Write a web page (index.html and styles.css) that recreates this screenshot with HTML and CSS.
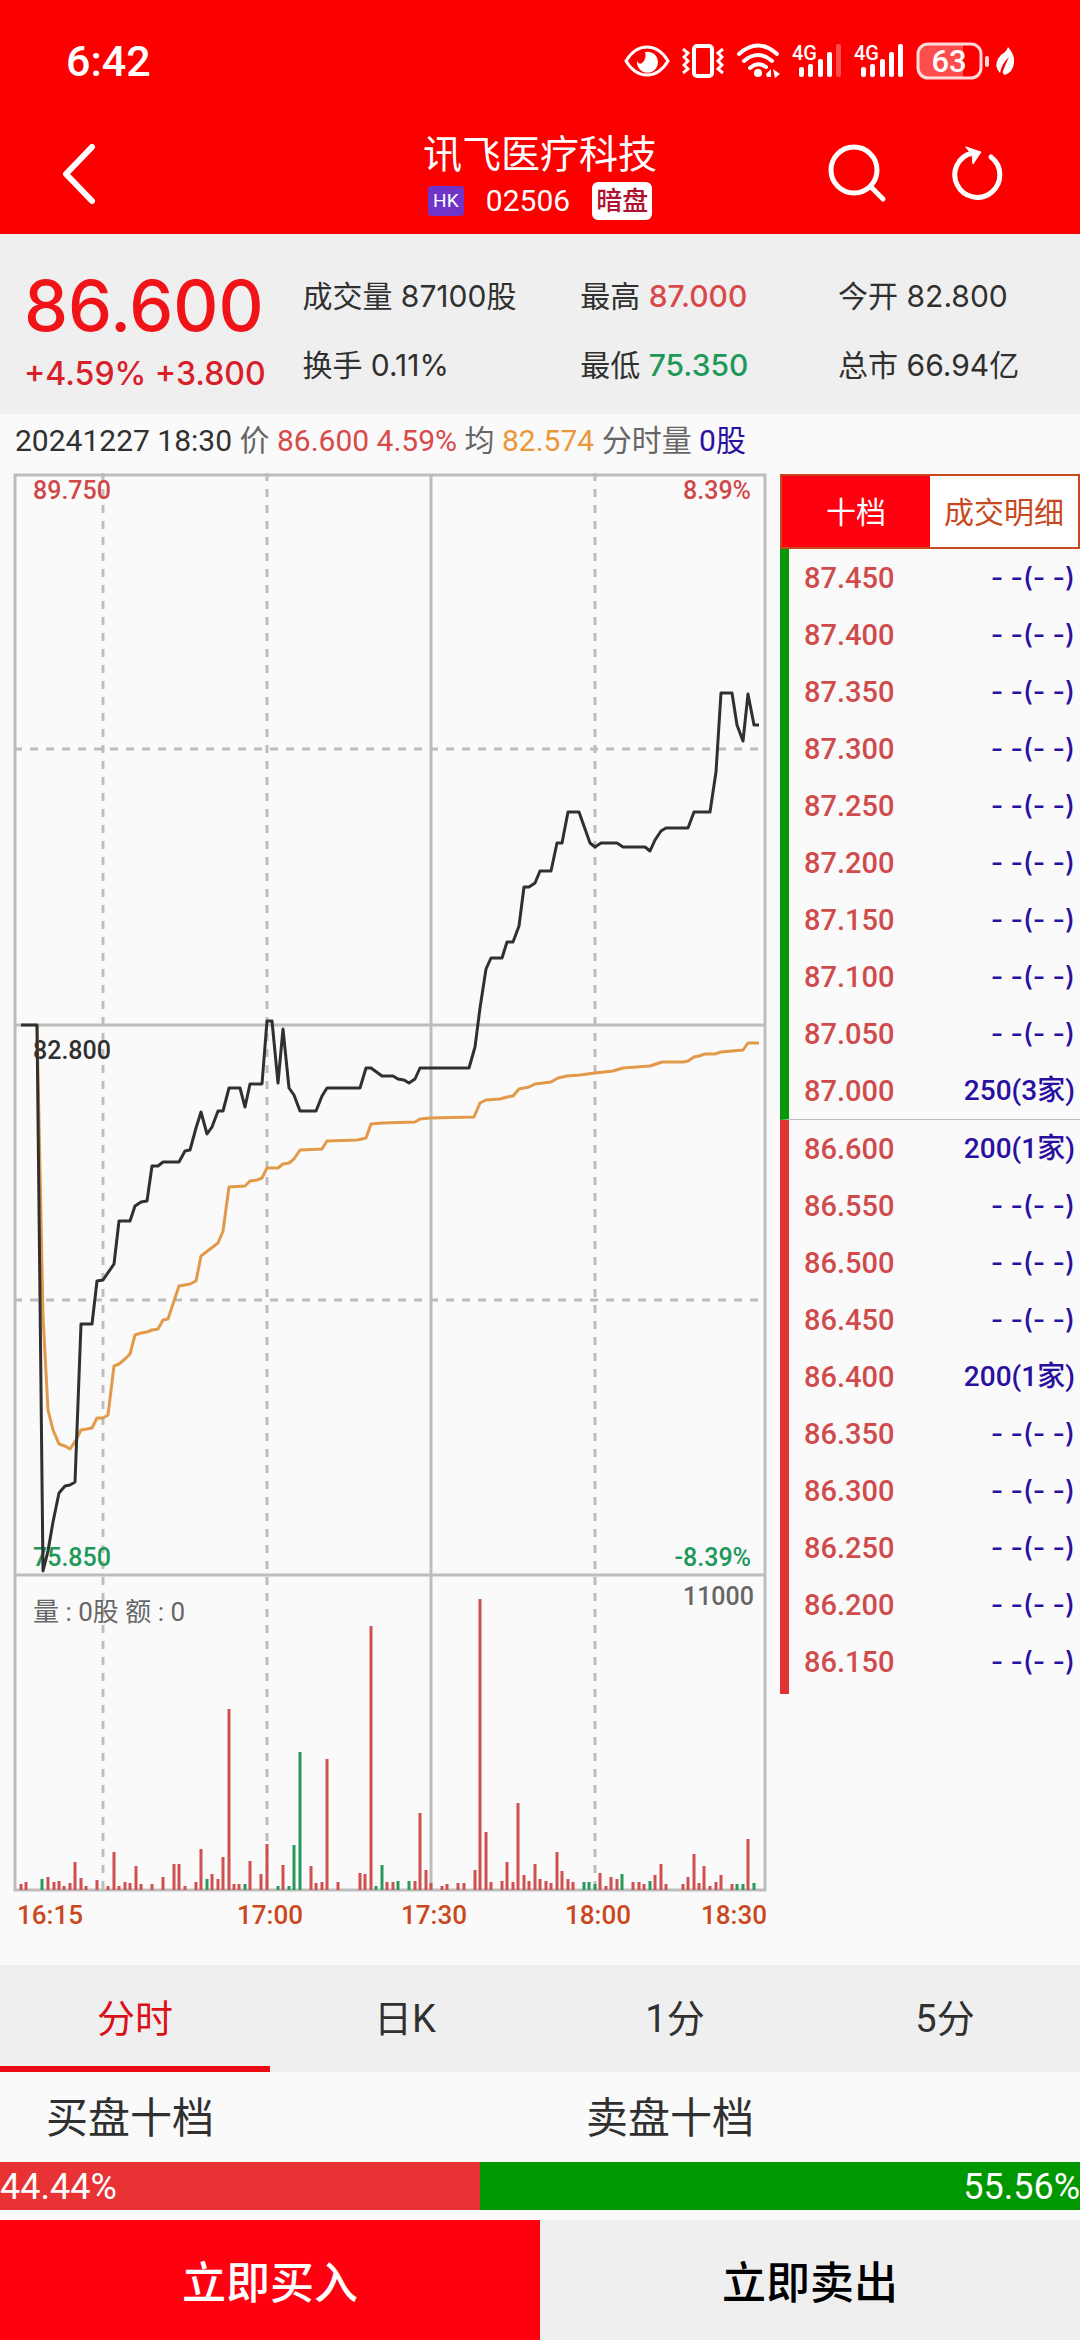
FILE: index.html
```html
<!DOCTYPE html>
<html lang="zh-CN">
<head>
  <meta charset="UTF-8">
  <meta name="viewport" content="width=device-width, initial-scale=1.0">
  <title>讯飞医疗科技 02506</title>
  <link rel="stylesheet" href="styles.css">
</head>
<body>
  <header class="top">
    <div class="status">
      <span class="clock">6:42</span>
      <div class="status-icons">
        <svg width="46" height="32" viewBox="0 0 46 32" fill="none" stroke="#fff" stroke-width="3">
          <path d="M2 16C8 6 15 2 23 2S38 6 44 16C38 26 31 30 23 30S8 26 2 16Z"/>
          <path d="M21 7A10.500 10.500 0 1 1 13 16Q15 20 18 18Q23 14 21 7Z" fill="#fff" stroke="none"/>
        </svg>
        <svg width="42" height="36" viewBox="0 0 42 36" fill="none" stroke="#fff" stroke-width="3">
          <rect x="12" y="3" width="18" height="30" rx="3" stroke-width="4"/>
          <path d="M1 6l5 4-4 4 4 4-4 4 4 4-5 4M41 6l-5 4 4 4-4 4 4 4-4 4 5 4"/>
        </svg>
        <svg width="44" height="36" viewBox="0 0 44 36" fill="none" stroke="#fff" stroke-width="4" stroke-linecap="round">
          <path d="M3 11Q22 -6 41 11M8 18Q22 6 36 18M14 25Q22 18 30 24"/>
          <circle cx="22" cy="30" r="4" fill="#fff" stroke="none"/>
          <path d="M30 31l5-5v8h-4zM37 26l7 5-5 4z" fill="#fff" stroke="none"/>
        </svg>
        <svg width="50" height="40" viewBox="0 -2 50 40" fill="#fff">
          <text class="net" x="0" y="17">4G</text>
          <rect x="7" y="24" width="5" height="10" rx="2"/>
          <rect x="16" y="21" width="5" height="13" rx="2"/>
          <rect x="26" y="16" width="5" height="18" rx="2"/>
          <rect x="35" y="9" width="5" height="25" rx="2"/>
          <rect x="44" y="1" width="5" height="33" rx="2" opacity=".3"/>
        </svg>
        <svg width="50" height="40" viewBox="0 -2 50 40" fill="#fff">
          <text class="net" x="0" y="17">4G</text>
          <rect x="7" y="24" width="5" height="10" rx="2"/>
          <rect x="16" y="21" width="5" height="13" rx="2"/>
          <rect x="26" y="16" width="5" height="18" rx="2"/>
          <rect x="35" y="9" width="5" height="25" rx="2"/>
          <rect x="44" y="1" width="5" height="33" rx="2"/>
        </svg>
        <svg width="98" height="38" viewBox="0 0 98 38" fill="#fff">
          <path d="M12 3H47V35H12Q3 35 3 26V12Q3 3 12 3Z" opacity=".3"/>
          <rect x="2" y="2" width="63" height="34" rx="10" fill="none" stroke="#fff" stroke-width="3" opacity=".85"/>
          <text class="battery" x="33" y="30" text-anchor="middle">63</text>
          <rect x="69" y="14" width="4" height="11" rx="2" opacity=".85"/>
          <path d="M92 5Q99 13 98 21Q97 30 89 33Q86 32 87 29Q90 21 93 15Q86 21 84 31Q78 25 82 17Q85 12 89 10Q91 8 92 5Z"/>
        </svg>
      </div>
    </div>
    <div class="nav">
      <button class="icon-btn back" type="button" aria-label="返回">
        <svg width="36" height="60" viewBox="0 0 36 60" fill="none" stroke="#fff" stroke-width="6" stroke-linecap="round" stroke-linejoin="round">
          <path d="M32 3L6 30L32 57"/>
        </svg>
      </button>
      <div class="stock">
        <h1>讯飞医疗科技</h1>
        <div class="stock-code">
          <span class="market">HK</span>
          <span>02506</span>
          <span class="grey-market">暗盘</span>
        </div>
      </div>
      <div class="actions">
        <button class="icon-btn" type="button" aria-label="搜索">
          <svg width="60" height="60" viewBox="0 0 60 60" fill="none" stroke="#fff" stroke-width="5" stroke-linecap="round">
            <circle cx="27" cy="26" r="23"/>
            <path d="M44 43L56 55"/>
          </svg>
        </button>
        <button class="icon-btn" type="button" aria-label="刷新">
          <svg width="60" height="60" viewBox="0 0 60 60" fill="none" stroke="#fff" stroke-width="5" stroke-linecap="round">
            <path d="M44 13A22.500 22.500 0 1 1 25 9"/>
            <path d="M19 3L34 8L26 20L25 11Z" fill="#fff" stroke-width="1"/>
          </svg>
        </button>
      </div>
    </div>
  </header>

  <section class="summary">
    <div class="last">
      <strong>86.600</strong>
      <span>+4.59% +3.800</span>
    </div>
    <ul class="figures">
      <li>成交量 87100股</li>
      <li>最高 <b class="up">87.000</b></li>
      <li>今开 82.800</li>
      <li>换手 0.11%</li>
      <li>最低 <b class="down">75.350</b></li>
      <li>总市 66.94亿</li>
    </ul>
  </section>

  <p class="tick">20241227 18:30 <i>价</i> <span class="up">86.600 4.59%</span> <i>均</i> <span class="avg">82.574</span> <i>分时量</i> <span class="vol">0股</span></p>

  <main class="board">
    <svg class="chart" viewBox="0 466 780 1499">
      <!-- grid -->
      <g class="grid">
        <path d="M15 475H765V1890H15ZM15 1025H765M15 1575H765M431 475V1890"/>
        <path stroke-dasharray="8 8" d="M103 473V1890M267 473V1890M595 473V1890M14 749H765M14 1300H765"/>
      </g>

      <!-- scale labels -->
      <g class="scale">
        <text class="s-up" x="33" y="499">89.750</text>
        <text class="s-up" x="751" y="499" text-anchor="end">8.39%</text>
        <text class="s-flat" x="33" y="1059">82.800</text>
        <text class="s-down" x="33" y="1566">75.850</text>
        <text class="s-down" x="751" y="1566" text-anchor="end">-8.39%</text>
        <text class="s-muted s-volume" x="33" y="1621">量 : 0股 额 : 0</text>
        <text class="s-muted" x="754" y="1605" text-anchor="end">11000</text>
      </g>
      <g class="times">
        <text x="17" y="1924">16:15</text>
        <text x="270" y="1924" text-anchor="middle">17:00</text>
        <text x="434" y="1924" text-anchor="middle">17:30</text>
        <text x="598" y="1924" text-anchor="middle">18:00</text>
        <text x="767" y="1924" text-anchor="end">18:30</text>
      </g>

      <!-- volume, one bar a minute -->
      <path class="bars bars-up" d="M21 1890V1884M26 1890V1882M48 1890V1877M54 1890V1882M59 1890V1881M64 1890V1886M70 1890V1883M75 1890V1862M81 1890V1878M86 1890V1886M97 1890V1880M108 1890V1886M114 1890V1852M119 1890V1886M125 1890V1882M130 1890V1883M136 1890V1866M141 1890V1884M152 1890V1884M163 1890V1877M174 1890V1864M179 1890V1864M185 1890V1886M196 1890V1882M201 1890V1849M212 1890V1874M218 1890V1879M223 1890V1857M229 1890V1709M234 1890V1884M239 1890V1884M250 1890V1861M261 1890V1874M267 1890V1844M283 1890V1865M311 1890V1866M316 1890V1883M322 1890V1882M327 1890V1759M338 1890V1882M360 1890V1873M365 1890V1874M371 1890V1626M387 1890V1882M393 1890V1882
        M415 1890V1881M420 1890V1813M426 1890V1870M431 1890V1883M442 1890V1886M447 1890V1884M458 1890V1883M464 1890V1883M475 1890V1870M480 1890V1599M486 1890V1832M491 1890V1882M502 1890V1881M507 1890V1862M513 1890V1882M518 1890V1803M524 1890V1875M529 1890V1881M535 1890V1864M540 1890V1879M546 1890V1881M551 1890V1883M557 1890V1852M562 1890V1871M568 1890V1879M573 1890V1882M600 1890V1873M606 1890V1886M611 1890V1877M617 1890V1879M633 1890V1882M639 1890V1882M644 1890V1884M655 1890V1875M661 1890V1864M666 1890V1884M683 1890V1884M688 1890V1877M694 1890V1854M699 1890V1883M704 1890V1866M710 1890V1886M716 1890V1882M721 1890V1875M732 1890V1884M748 1890V1839"/>
      <path class="bars bars-down" d="M42 1890V1879M207 1890V1879M245 1890V1884M278 1890V1886M289 1890V1886M294 1890V1845M300 1890V1752M376 1890V1886M382 1890V1865M398 1890V1881M409 1890V1881M584 1890V1882M589 1890V1882M595 1890V1884M622 1890V1874M650 1890V1881M737 1890V1884M743 1890V1884M754 1890V1883"/>

      <!-- average and price -->
      <polyline class="line line-avg" points="37,1025 43,1316 48,1410 53,1430 59,1444 65,1446 70,1449 76,1440 81,1430 87,1429 92,1428 97,1418 103,1418 108,1415 114,1366 119,1364 125,1359 130,1354 135,1335 141,1333 147,1332 152,1330 158,1329 163,1320 168,1319 174,1301 179,1286 190,1284 196,1281 201,1256 218,1243 223,1231 229,1187 245,1186 250,1181 257,1180 262,1178 267,1168 278,1168 283,1164 289,1163 294,1159 300,1150 322,1149 327,1141 357,1140 366,1138 371,1124 382,1123 415,1122 420,1119 430,1118 474,1117 480,1103 486,1100 500,1099 507,1097 513,1096 519,1089 529,1087 535,1084 551,1082 558,1078 567,1076 580,1075 595,1073 613,1071 623,1068 650,1066 662,1062 683,1062 688,1061 694,1057 699,1056 705,1054 715,1054 721,1052 743,1050 748,1043 759,1043"/>
      <polyline class="line line-price" points="21,1025 37,1025 43,1571 48,1551 53,1522 59,1493 65,1486 70,1485 75,1482 81,1324 92,1324 97,1281 103,1280 114,1264 119,1221 130,1221 135,1206 141,1202 147,1201 152,1166 158,1166 163,1162 179,1162 185,1151 190,1150 196,1128 201,1112 207,1134 212,1127 218,1111 223,1111 229,1088 240,1088 245,1107 250,1084 262,1084 267,1021 272,1021 278,1083 283,1029 289,1088 294,1095 300,1111 316,1111 322,1096 327,1088 360,1088 366,1068 371,1068 382,1076 393,1076 398,1079 404,1080 409,1083 415,1079 420,1068 469,1068 475,1047 480,1008 486,969 491,958 502,958 507,942 513,942 519,926 524,887 529,887 535,883 540,871 551,871 557,843 562,843 568,812 579,812 590,843 595,847 601,843 617,843 623,847 645,847 650,851 655,840 661,831 666,828 688,828 694,812 710,812 716,772 721,693 732,693 737,725 743,741 748,694 754,725 759,725"/>
    </svg>

    <aside class="depth">
      <div class="depth-tabs">
        <button class="active" type="button">十档</button>
        <button type="button">成交明细</button>
      </div>
      <div class="asks">
        <table>
          <tr><td>87.450</td><td class="none">- -(- -)</td></tr>
          <tr><td>87.400</td><td class="none">- -(- -)</td></tr>
          <tr><td>87.350</td><td class="none">- -(- -)</td></tr>
          <tr><td>87.300</td><td class="none">- -(- -)</td></tr>
          <tr><td>87.250</td><td class="none">- -(- -)</td></tr>
          <tr><td>87.200</td><td class="none">- -(- -)</td></tr>
          <tr><td>87.150</td><td class="none">- -(- -)</td></tr>
          <tr><td>87.100</td><td class="none">- -(- -)</td></tr>
          <tr><td>87.050</td><td class="none">- -(- -)</td></tr>
          <tr><td>87.000</td><td>250(3家)</td></tr>
        </table>
      </div>
      <div class="bids">
        <table>
          <tr><td>86.600</td><td>200(1家)</td></tr>
          <tr><td>86.550</td><td class="none">- -(- -)</td></tr>
          <tr><td>86.500</td><td class="none">- -(- -)</td></tr>
          <tr><td>86.450</td><td class="none">- -(- -)</td></tr>
          <tr><td>86.400</td><td>200(1家)</td></tr>
          <tr><td>86.350</td><td class="none">- -(- -)</td></tr>
          <tr><td>86.300</td><td class="none">- -(- -)</td></tr>
          <tr><td>86.250</td><td class="none">- -(- -)</td></tr>
          <tr><td>86.200</td><td class="none">- -(- -)</td></tr>
          <tr><td>86.150</td><td class="none">- -(- -)</td></tr>
        </table>
      </div>
    </aside>
  </main>

  <nav class="periods">
    <button class="active" type="button">分时</button>
    <button type="button">日K</button>
    <button type="button">1分</button>
    <button type="button">5分</button>
  </nav>

  <section class="ratio">
    <div class="ratio-titles">
      <h2>买盘十档</h2>
      <h2>卖盘十档</h2>
    </div>
    <div class="ratio-bar">
      <span class="buy-part" style="width: 44.44%">44.44%</span>
      <span class="sell-part">55.56%</span>
    </div>
  </section>

  <footer class="trade">
    <button class="buy" type="button">立即买入</button>
    <button class="sell" type="button">立即卖出</button>
  </footer>
</body>
</html>
```
FILE: styles.css
```css
* {
  box-sizing: border-box;
}

body {
  margin: 0;
  min-height: 100vh;
  background: #fafafa;
  color: #303030;
  font-family: Roboto, "Noto Sans CJK SC", sans-serif;
  font-size: 30px;
}

h1,
h2,
p,
ul {
  margin: 0;
  padding: 0;
  font-weight: 400;
}

button {
  border: none;
  padding: 0;
  background: none;
  color: inherit;
  font: inherit;
  cursor: pointer;
}

svg {
  display: block;
}

/* header */
.top {
  background: #fc0000;
  color: #fff;
}

.status {
  display: flex;
  align-items: center;
  justify-content: space-between;
  height: 122px;
  padding: 0 66px;
}

.clock {
  font-size: 43px;
  font-weight: 500;
}

.status-icons {
  display: flex;
  align-items: center;
  gap: 12px;
}

.net {
  font-size: 20px;
  font-weight: 500;
}

.battery {
  font-size: 31px;
  font-weight: 500;
}

.nav {
  display: grid;
  grid-template-columns: 1fr auto 1fr;
  align-items: center;
  height: 112px;
  padding: 0 73px 8px 60px;
}

.icon-btn {
  display: flex;
  justify-self: start;
}

.stock {
  text-align: center;
  padding-left: 13px;
}

.stock h1 {
  font-size: 39px;
  line-height: 54px;
}

.stock-code {
  display: flex;
  align-items: center;
  justify-content: center;
  gap: 22px;
  line-height: 38px;
}

.market {
  width: 36px;
  border-radius: 4px;
  background: #7035c8;
  font-size: 19px;
  line-height: 30px;
}

.grey-market {
  padding: 0 4px;
  border-radius: 6px;
  background: #fff;
  color: #b01030;
  font-size: 26px;
  font-weight: 500;
}

.actions {
  display: flex;
  justify-content: flex-end;
  gap: 60px;
}

/* summary */
.summary {
  display: flex;
  align-items: center;
  height: 180px;
  padding-top: 14px;
  background: #efefef;
  font-family: Inter, "Noto Sans CJK SC", sans-serif;
}

.last {
  flex: 0 0 28%;
  padding-left: 24px;
  color: #d8202a;
  font-size: 32px;
  font-weight: 500;
  white-space: nowrap;
}

.last strong {
  display: block;
  color: #f01418;
  font-size: 70px;
  font-weight: 500;
  line-height: 86px;
}

.last span {
  display: block;
  line-height: 50px;
}

.figures {
  flex: 1;
  display: grid;
  grid-template-columns: 278fr 258fr 242fr;
  line-height: 69px;
  list-style: none;
  white-space: nowrap;
}

.figures b {
  font-weight: 500;
}

.up {
  color: #d84a4a;
}

.down {
  color: #20985a;
}

.avg {
  color: #e89838;
}

.vol {
  color: #2a10a0;
}

.tick {
  padding: 2px 0 0 15px;
  line-height: 50px;
  white-space: nowrap;
}

.tick i {
  color: #666;
  font-style: normal;
}

/* chart and order book */
.board {
  display: grid;
  grid-template-columns: 780fr 300fr;
  align-items: start;
}

.chart {
  width: 100%;
  height: auto;
}

.grid path {
  fill: none;
  stroke: #bdbdbd;
  stroke-width: 3px;
}

.scale {
  font-size: 25px;
  font-weight: 500;
}

.scale .s-volume {
  font-size: 26px;
  font-weight: 400;
}

.s-up {
  fill: #d04848;
}

.s-down {
  fill: #20985a;
}

.s-flat {
  fill: #303030;
}

.s-muted {
  fill: #666;
}

.times {
  fill: #c84820;
  font-size: 26px;
  font-weight: 500;
}

.bars {
  stroke-width: 3px;
}

.bars-up {
  stroke: #cf5050;
}

.bars-down {
  stroke: #28985c;
}

.line {
  fill: none;
  stroke-width: 3px;
  stroke-linejoin: round;
}

.line-avg {
  stroke: #e29a4a;
}

.line-price {
  stroke: #303030;
}

.depth {
  padding-top: 8px;
}

.depth-tabs {
  display: grid;
  grid-template-columns: 1fr 1fr;
  height: 75px;
  border: 2px solid #c84820;
  background: #fff;
  color: #c84820;
  white-space: nowrap;
}

.depth-tabs button {
  padding-bottom: 4px;
}

.depth-tabs .active {
  background: #ff0010;
  color: #fff;
}

.asks,
.bids {
  padding-left: 15px;
  border-left: 9px solid #089808;
}

.asks {
  border-bottom: 1px solid #bdbdbd;
}

.bids {
  padding-bottom: 4px;
  border-left-color: #e03434;
}

.depth table {
  width: 100%;
  border-collapse: collapse;
  font-size: 29px;
  font-weight: 500;
}

.depth td {
  height: 57px;
  padding: 0;
  color: #d04c4c;
  line-height: 40px;
}

.depth td + td {
  padding-right: 5px;
  color: #2a10a0;
  font-size: 28px;
  text-align: right;
}

.depth td.none {
  font-family: Inter, sans-serif;
  font-size: 27px;
}

/* period tabs */
.periods {
  display: grid;
  grid-template-columns: repeat(4, 1fr);
  height: 107px;
  background: #efefef;
  font-size: 38px;
}

.periods button {
  border-bottom: 6px solid transparent;
}

.periods .active {
  border-bottom-color: #ec0a14;
  color: #dc1018;
}

/* buy and sell ratio */
.ratio-titles {
  display: grid;
  grid-template-columns: 1fr 1fr;
  padding-top: 4px;
}

.ratio-titles h2 {
  padding-left: 46px;
  font-size: 42px;
  line-height: 86px;
}

.ratio-bar {
  display: flex;
  color: #fff;
  font-size: 36px;
  line-height: 46px;
}

.ratio-bar span {
  padding-top: 2px;
}

.buy-part {
  background: #e83234;
}

.sell-part {
  flex: 1;
  background: #009800;
  text-align: right;
}

.trade {
  display: grid;
  grid-template-columns: 1fr 1fr;
  margin-top: 10px;
  font-size: 44px;
  font-weight: 500;
}

.trade button {
  height: 120px;
}

.buy {
  background: #ff0010;
  color: #fff;
}

.sell {
  background: #efefef;
  color: #000;
}
```
